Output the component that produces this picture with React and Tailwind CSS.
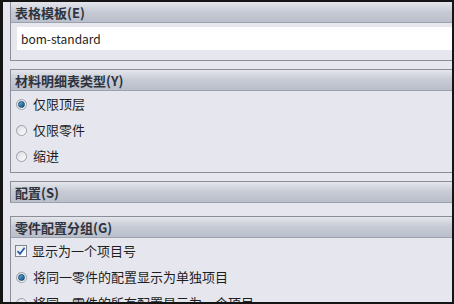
import React from "react";

function Header({ children, top = false }) {
  return (
    <div
      className={
        "h-[21px] flex items-center pl-[4px] border-b border-[#9ea1ac] bg-gradient-to-b from-[#e4e6eb] via-[#c6cad4] to-[#b9bfcb] text-[13px] font-bold text-[#2e333d] leading-none " +
        (top ? "" : "")
      }
    >
      {children}
    </div>
  );
}

function Radio({ checked, label }) {
  return (
    <div className="h-[26px] flex items-center">
      <span className="ml-[5px] w-[11px] h-[11px] rounded-full border border-[#9aa0aa] bg-gradient-to-br from-[#d9dce2] to-[#ffffff] flex items-center justify-center">
        {checked && (
          <span className="w-[7px] h-[7px] rounded-full bg-gradient-to-br from-[#5fb1de] to-[#0f4f7e] border border-[#134a70]" />
        )}
      </span>
      <span className="ml-[6px] text-[13px] text-[#1e1e1e]">{label}</span>
    </div>
  );
}

export default function App() {
  return (
    <div
      className="w-[454px] h-[304px] overflow-hidden bg-[#e6e6ef] border-t-2 border-r-2 border-b-2 border-l-[3px] border-[#151515] pl-[7px]"
      style={{ fontFamily: '"Noto Sans CJK SC", "Liberation Sans", sans-serif' }}
    >
      {/* 表格模板 */}
      <div className="border-l border-b border-[#8b8e98] h-[59px]">
        <Header>表格模板(E)</Header>
        <div className="mt-[4px] ml-[6px] h-[23px] bg-white flex items-center pl-[4px] text-[12px] text-[#222]">
          bom-standard
        </div>
      </div>

      {/* 材料明细表类型 */}
      <div className="mt-[8px] border-l border-t border-b border-[#8b8e98] h-[104px]">
        <Header>材料明细表类型(Y)</Header>
        <Radio checked label="仅限顶层" />
        <Radio label="仅限零件" />
        <Radio label="缩进" />
      </div>

      {/* 配置 */}
      <div className="mt-[8px] border-l border-t border-[#8b8e98]">
        <Header>配置(S)</Header>
      </div>

      {/* 零件配置分组 */}
      <div className="mt-[13px] border-l border-t border-[#8b8e98]">
        <Header>零件配置分组(G)</Header>
        <div className="h-[26px] flex items-center">
          <span className="ml-[4px] w-[12px] h-[12px] border border-[#7f8590] bg-gradient-to-br from-[#e6e8ec] to-[#ffffff] flex items-center justify-center">
            <svg width="10" height="10" viewBox="0 0 10 10">
              <path d="M1.5 5.2 L4 7.8 L8.6 1.8" fill="none" stroke="#2a5fa8" strokeWidth="1.8" />
            </svg>
          </span>
          <span className="ml-[5px] text-[13px] text-[#1e1e1e]">显示为一个项目号</span>
        </div>
        <Radio checked label="将同一零件的配置显示为单独项目" />
        <Radio label="将同一零件的所有配置显示为一个项目" />
      </div>
    </div>
  );
}
